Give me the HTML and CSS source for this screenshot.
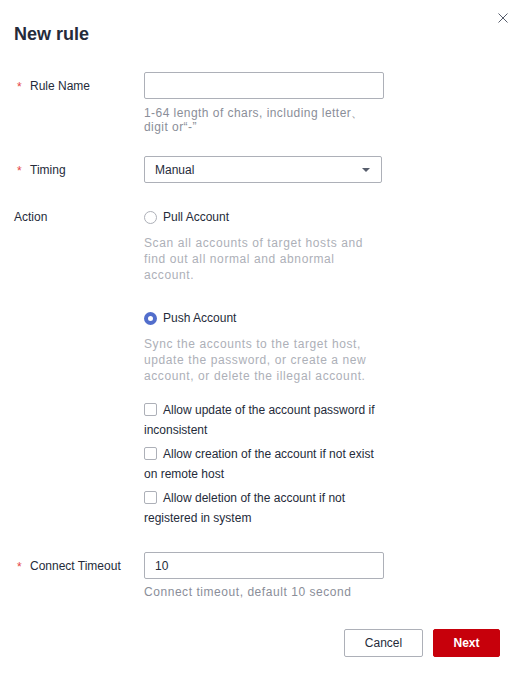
FILE: index.html
```html
<!DOCTYPE html>
<html lang="en">
<head>
  <meta charset="UTF-8" />
  <meta name="viewport" content="width=device-width, initial-scale=1.0"/>
  <title>New rule</title>
  <link rel="stylesheet" href="styles.css">
</head>
<body>

  <div class="dialog">
    <span class="close">
      <svg width="10" height="10" viewBox="0 0 10 10">
        <path d="M0.5 0.5 L9.5 9.5 M9.5 0.5 L0.5 9.5" stroke="#575d6c" stroke-width="1" fill="none"/>
      </svg>
    </span>
    <h1 class="title">New rule</h1>

    <div class="row row-name">
      <label class="label required">Rule Name</label>
      <div class="control">
        <input class="input" type="text" value="">
        <div class="hint">1-64 length of chars, including letter、 digit or“-”</div>
      </div>
    </div>

    <div class="row row-timing">
      <label class="label required">Timing</label>
      <div class="control">
        <div class="select">
          <span>Manual</span>
          <span class="caret"></span>
        </div>
      </div>
    </div>

    <div class="row row-action">
      <label class="label">Action</label>
      <div class="control">
        <div class="radio"><span class="dot"></span>Pull Account</div>
        <div class="desc">Scan all accounts of target hosts and find out all normal and abnormal account.</div>

        <div class="radio radio-push"><span class="dot checked"></span>Push Account</div>
        <div class="desc">Sync the accounts to the target host, update the password, or create a new account, or delete the illegal account.</div>

        <div class="checks">
          <div class="check"><span class="box"></span>Allow update of the account password if inconsistent</div>
          <div class="check"><span class="box"></span>Allow creation of the account if not exist on remote host</div>
          <div class="check"><span class="box"></span>Allow deletion of the account if not registered in system</div>
        </div>
      </div>
    </div>

    <div class="row row-timeout">
      <label class="label required">Connect Timeout</label>
      <div class="control">
        <input class="input" type="text" value="10">
        <div class="hint hint-timeout">Connect timeout, default 10 second</div>
      </div>
    </div>

    <div class="footer">
      <button class="btn">Cancel</button>
      <button class="btn btn-primary">Next</button>
    </div>
  </div>

</body>
</html>
```

FILE: styles.css
```css
body {
  margin: 0;
  padding: 0;
  background: #ffffff;
  font-family: 'Liberation Sans', Arial, sans-serif;
  font-size: 12px;
  color: #252b3a;
}

.dialog {
  position: relative;
  width: 522px;
  height: 680px;
  box-sizing: border-box;
  padding: 23px 22px 0 14px;
}

.close {
  position: absolute;
  top: 13px;
  left: 498px;
  width: 10px;
  height: 10px;
  line-height: 0;
}

.title {
  margin: 0;
  font-size: 18px;
  line-height: 22px;
  font-weight: bold;
  color: #252b3a;
}

.row {
  display: flex;
}

.row-name { margin-top: 27px; }
.row-timing { margin-top: 22px; }
.row-action { margin-top: 24px; }
.row-timeout { margin-top: 24px; }

.label {
  width: 130px;
  flex-shrink: 0;
  box-sizing: border-box;
  padding-top: 1px;
  line-height: 26px;
  position: relative;
  color: #252b3a;
}

.required {
  padding-left: 16px;
}

.row-action .label {
  line-height: 20px;
  padding-top: 0;
}

.required::before {
  content: '*';
  position: absolute;
  left: 3px;
  top: 2px;
  color: #e54545;
  font-size: 12px;
}

.control {
  width: 240px;
}

.input {
  display: block;
  width: 240px;
  height: 27px;
  box-sizing: border-box;
  border: 1px solid #adb0b8;
  border-radius: 2px;
  padding: 0 10px;
  font-family: inherit;
  font-size: 12px;
  color: #252b3a;
  outline: none;
}

.hint {
  margin-top: 7px;
  line-height: 14px;
  color: #8a8e99;
  letter-spacing: 0.45px;
}

.hint-timeout {
  margin-top: 6px;
  letter-spacing: 0.55px;
}

.select {
  width: 216px;
  height: 25px;
  border: 1px solid #adb0b8;
  border-radius: 2px;
  display: flex;
  align-items: center;
  justify-content: space-between;
  padding: 0 10px;
}

.caret {
  width: 0;
  height: 0;
  border-left: 4px solid transparent;
  border-right: 4px solid transparent;
  border-top: 4px solid #575d6c;
  margin-right: 1px;
}

.radio {
  display: flex;
  align-items: center;
  line-height: 20px;
  color: #252b3a;
}

.radio-push {
  margin-top: 25px;
}

.dot {
  width: 13px;
  height: 13px;
  box-sizing: border-box;
  border: 1px solid #adb0b8;
  border-radius: 50%;
  margin: 0 6px 0 0;
  background: #fff;
}

.dot.checked {
  border: 4px solid #526ecc;
}

.desc {
  margin-top: 8px;
  line-height: 16px;
  color: #adb0b8;
  letter-spacing: 0.6px;
}

.checks {
  margin-top: 16px;
  display: flex;
  flex-direction: column;
  gap: 4px;
}

.check {
  line-height: 20px;
  color: #252b3a;
}

.box {
  display: inline-block;
  width: 13px;
  height: 13px;
  box-sizing: border-box;
  border: 1px solid #adb0b8;
  border-radius: 2px;
  vertical-align: -2px;
  margin-right: 6px;
}

.footer {
  display: flex;
  justify-content: flex-end;
  gap: 10px;
  margin-top: 30px;
}

.btn {
  height: 28px;
  min-width: 79px;
  border: 1px solid #adb0b8;
  border-radius: 2px;
  background: #fff;
  font-family: inherit;
  font-size: 12px;
  color: #252b3a;
  padding: 0 16px;
}

.btn-primary {
  min-width: 67px;
  border-color: #c7000b;
  background: #c7000b;
  color: #fff;
  font-weight: bold;
}
```
